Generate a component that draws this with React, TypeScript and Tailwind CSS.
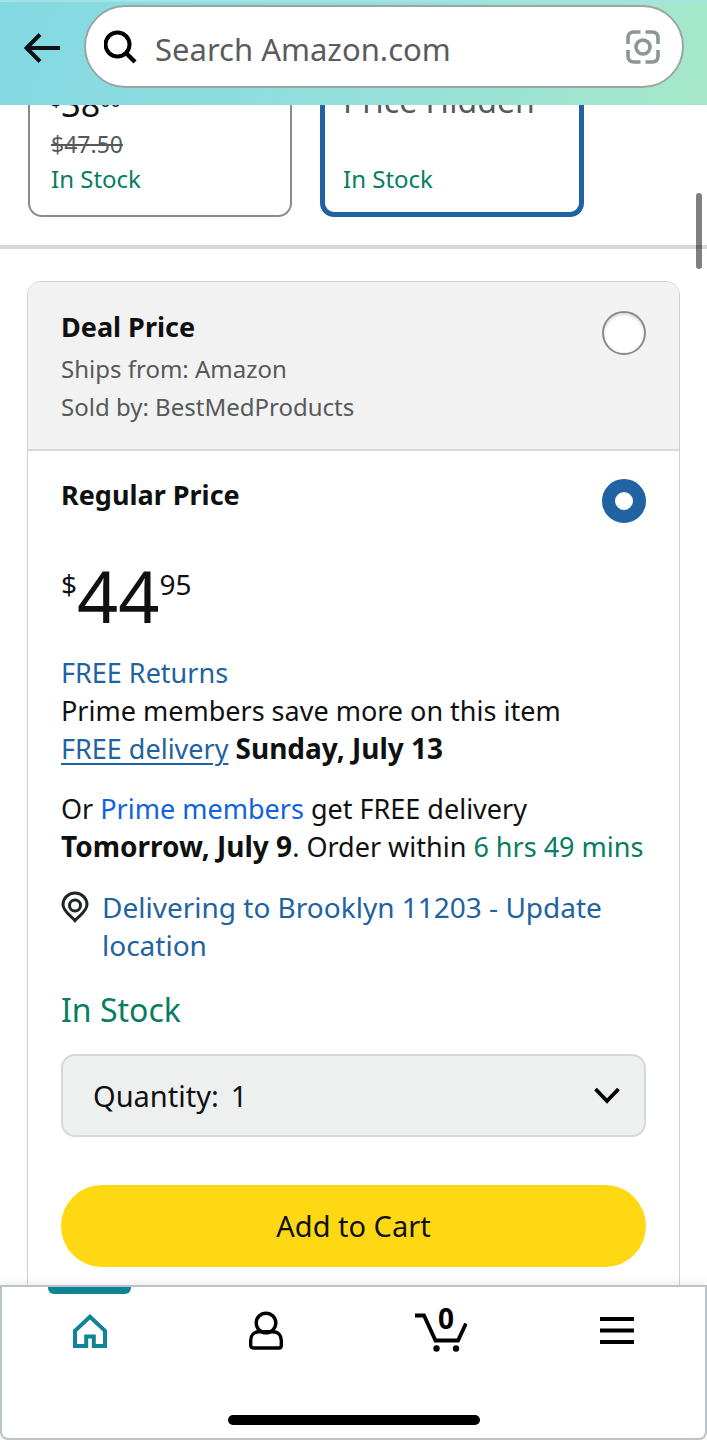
import { useState } from "react";

function Header() {
  return (
    <header className="relative z-10 flex h-[105px] shrink-0 items-start border-t-2 border-[#a3e3e4] bg-linear-105 from-[#83d9e3] via-[#93dfdb] via-50% to-[#a7e8c9] pt-[3px] pr-[23px] pl-6">
      <button type="button" aria-label="Back" className="mt-[28px] shrink-0">
        <svg width="36" height="30" viewBox="0 0 36 30" fill="none" stroke="#0f1111" strokeWidth="4">
          <path d="M36 15H3M16 1.5L2.5 15L16 28.500" />
        </svg>
      </button>
      <form
        role="search"
        className="ml-6 flex h-[83px] flex-1 items-center rounded-full border-2 border-[#9aa5a6] bg-white pr-[22px] pl-[18px]"
        onSubmit={(e) => e.preventDefault()}
      >
        <button type="submit" aria-label="Search" className="shrink-0">
          <svg width="34" height="34" viewBox="0 0 34 34" fill="none" stroke="#000" strokeWidth="4">
            <circle cx="13.500" cy="14.500" r="12" />
            <path d="M22 23L31 32" strokeWidth="4.400" />
          </svg>
        </button>
        <input
          type="text"
          aria-label="Search Amazon.com"
          placeholder="Search Amazon.com"
          className="mt-1 ml-[17px] min-w-0 flex-1 bg-transparent text-[31px] leading-[44px] text-[#0f1111] outline-none placeholder:text-[#5a5c5c]"
        />
        <button type="button" aria-label="Scan with camera" className="shrink-0">
          <svg width="34" height="34" viewBox="0 0 34 34" fill="none" stroke="#8a9799" strokeWidth="3.600">
            <path d="M2 14V8Q2 2 8 2H14.500M19.500 2H26Q32 2 32 8V14M32 20V26Q32 32 26 32H19.500M14.500 32H8Q2 32 2 26V20" />
            <circle cx="17" cy="17" r="7" />
          </svg>
        </button>
      </form>
    </header>
  );
}

function Variants() {
  return (
    <section className="-mt-[37px] flex gap-7 border-b-4 border-[#d5d9d9] px-7 pb-7">
      <button
        type="button"
        className="flex h-[149px] w-[264px] flex-col justify-end rounded-[14px] border-2 border-[#888c8c] px-[21px] pb-[18px] text-left"
      >
        <span className="flex items-start text-[#0f1111]">
          <span className="text-[18px] leading-[32px]">$</span>
          <span className="text-[34px] leading-[40px]">38</span>
          <span className="text-[18px] leading-[32px]">00</span>
        </span>
        <s className="mt-[3px] text-[23px] leading-[34px] text-[#565959]">$47.50</s>
        <span className="text-[24px] leading-[36px] text-[#067d62]">In Stock</span>
      </button>
      <button
        type="button"
        aria-pressed="true"
        className="flex h-[149px] w-[264px] flex-col justify-between rounded-[14px] border-5 border-[#2162a1] px-[18px] pt-[7px] pb-[15px] text-left"
      >
        <span className="text-[32px] leading-[42px] text-[#565959]">Price Hidden</span>
        <span className="text-[24px] leading-[36px] text-[#067d62]">In Stock</span>
      </button>
    </section>
  );
}

const radio =
  "mt-[3px] size-11 shrink-0 appearance-none rounded-full border-2 border-[#888c8c] bg-white shadow-[inset_0_2px_3px_rgba(15,17,17,0.15)] checked:border-[13px] checked:border-[#2162a1] checked:shadow-none";

function Offers() {
  const [offer, setOffer] = useState("regular");
  return (
    <section className="mt-8 ml-[27px] mr-[27px] overflow-hidden rounded-[14px] border border-[#cdd1d1]">
      <div className="flex items-start justify-between bg-[#f2f2f2] px-[33px] pt-[26px] pb-[23px]">
        <label htmlFor="deal" className="flex flex-col text-[24px] leading-[38px] text-[#565959]">
          <span className="mb-1 text-[27px] font-bold text-[#0f1111]">Deal Price</span>
          <span>Ships from: Amazon</span>
          <span>Sold by: BestMedProducts</span>
        </label>
        <input id="deal" type="radio" name="offer" className={radio} checked={offer === "deal"} onChange={() => setOffer("deal")} />
      </div>
      <div className="border-t-2 border-[#d5d9d9] px-[33px] pt-[25px] pb-14 text-[27px] leading-[38px]">
        <div className="flex items-start justify-between">
          <label htmlFor="regular" className="font-bold">
            Regular Price
          </label>
          <input id="regular" type="radio" name="offer" className={radio} checked={offer === "regular"} onChange={() => setOffer("regular")} />
        </div>
        <p className="mt-[34px] flex items-start text-[28px]">
          <span className="pt-2">$</span>
          <span className="text-[72px] leading-[76px]">44</span>
          <span className="pt-2">95</span>
        </p>
        <div className="mt-[21px]">
          <a href="#returns" className="text-[#2162a1]">FREE Returns</a>
          <p>Prime members save more on this item</p>
          <p>
            <a href="#delivery" className="text-[#2162a1] underline decoration-2 underline-offset-4">FREE delivery</a>{" "}
            <strong className="text-[28px] leading-none">Sunday, July 13</strong>
          </p>
        </div>
        <p className="mt-[22px] whitespace-nowrap">
          Or <a href="#prime" className="text-[#0f62e0]">Prime members</a> get FREE delivery
          <br />
          <strong className="text-[28px] leading-none">Tomorrow, July 9</strong>. Order within{" "}
          <span className="text-[#067d62]">6 hrs 49 mins</span>
        </p>
        <a href="#location" className="mt-[22px] flex items-start gap-[13px] text-[28px] text-[#2162a1]">
          <svg className="mt-[3px] shrink-0" width="28" height="32" viewBox="0 0 28 32" fill="none" stroke="#222526" strokeWidth="3">
            <path d="M14 29.500C10 24.500 2 20.500 2 13.500A12 11.500 0 0 1 26 13.500C26 20.500 18 24.500 14 29.500Z" />
            <circle cx="14" cy="14.500" r="5.500" />
          </svg>
          <span>Delivering to Brooklyn 11203 - Update location</span>
        </a>
        <p className="mt-6 text-[32px] leading-[44px] text-[#067d62]">In Stock</p>
        <div className="mt-[22px] flex h-[83px] items-center rounded-[14px] border-2 border-[#d5d9d9] bg-[#eef0f0] pr-6 pl-[30px] text-[29px]">
          <label htmlFor="quantity">Quantity:</label>
          <select id="quantity" defaultValue="1" className="ml-3 h-full min-w-0 flex-1 appearance-none bg-transparent outline-none">
            <option>1</option>
            <option>2</option>
            <option>3</option>
          </select>
          <svg className="pointer-events-none shrink-0" width="26" height="18" viewBox="0 0 26 18" fill="none" stroke="#000" strokeWidth="3.800">
            <path d="M1.500 2L13 14L24.500 2" />
          </svg>
        </div>
        <button type="button" className="mt-12 h-[82px] w-full rounded-full bg-[#ffd814] text-[29px]">
          Add to Cart
        </button>
      </div>
    </section>
  );
}

function TabBar() {
  return (
    <nav className="relative z-10 h-[155px] shrink-0 rounded-b-lg border-2 border-[#bcc3c8] bg-white shadow-[0_-2px_10px_rgba(15,17,17,0.08)]">
      <div className="flex h-full flex-col justify-between">
        <div className="grid grid-cols-4">
          <a href="#home" aria-label="Home" aria-current="page" className="flex flex-col items-center gap-5 text-[#0f8496]">
            <span className="h-[7px] w-[83px] rounded-b-md bg-[#0f8496]" />
            <svg width="34" height="35" viewBox="0 0 34 35" fill="none" stroke="currentColor" strokeWidth="4">
              <path d="M2 32V16.800L17 2.800L32 16.800V32H20.800V22.500H13.200V32Z" />
            </svg>
          </a>
          <a href="#account" aria-label="Account" className="flex justify-center pt-6">
            <svg width="34" height="40" viewBox="0 0 34 40" fill="none" stroke="#000" strokeWidth="3.400">
              <circle cx="17" cy="12" r="9.800" />
              <path d="M10 20.800H24C29 20.800 32.300 24.500 32.300 29.500V34.500Q32.300 37 29.800 37H4.200Q1.700 37 1.700 34.500V29.500C1.700 24.500 5 20.800 10 20.800Z" />
            </svg>
          </a>
          <a href="#cart" aria-label="Cart" className="flex justify-center pt-5">
            <svg width="52" height="46" viewBox="0 0 52 46" fill="none" stroke="#000" strokeWidth="3.800">
              <path d="M0 8.500H9L20.500 33.500H43L51 16.500" />
              <circle cx="21.500" cy="41.500" r="3.200" fill="#000" stroke="none" />
              <circle cx="41" cy="41.500" r="3.200" fill="#000" stroke="none" />
              <text x="31" y="22" textAnchor="middle" fontSize="28" fontWeight="700" fill="#000" stroke="none">0</text>
            </svg>
          </a>
          <button type="button" aria-label="Menu" className="flex justify-center pt-[30px]">
            <svg width="34" height="28" viewBox="0 0 34 28" stroke="#000" strokeWidth="4">
              <path d="M0 2H34M0 13.500H34M0 25H34" />
            </svg>
          </button>
        </div>
        <div className="mx-auto mb-[13px] h-[10px] w-[252px] rounded-full bg-black" />
      </div>
    </nav>
  );
}

export default function App() {
  return (
    <div className="relative flex h-screen flex-col overflow-hidden bg-white font-['Noto_Sans',sans-serif] text-[#0f1111]">
      <Header />
      <main className="min-h-0 flex-1 overflow-hidden">
        <Variants />
        <Offers />
      </main>
      <TabBar />
      <div className="absolute top-[193px] right-[5px] h-[76px] w-[6px] rounded-full bg-black/50" />
    </div>
  );
}
